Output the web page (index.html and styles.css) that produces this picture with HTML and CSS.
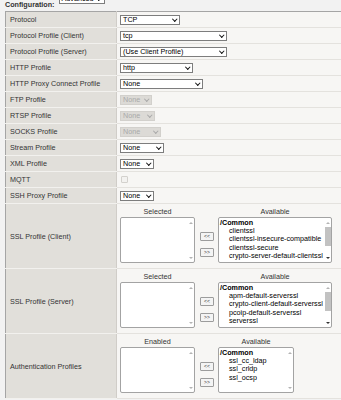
FILE: index.html
```html
<!DOCTYPE html>
<html lang="en">
<head>
    <meta charset="UTF-8">
    <title>Virtual Server Properties</title>
    <link rel="stylesheet" href="styles.css">
</head>
<body>
    <div class="config-bar">
        <span class="config-label">Configuration:</span>
        <span class="sel sel-adv">Advanced</span>
    </div>

    <table class="props">
        <tr><th>Protocol</th><td><span class="sel w-tcp">TCP</span></td></tr>
        <tr><th>Protocol Profile (Client)</th><td><span class="sel w-long">tcp</span></td></tr>
        <tr><th>Protocol Profile (Server)</th><td><span class="sel w-long">(Use Client Profile)</span></td></tr>
        <tr><th>HTTP Profile</th><td><span class="sel w-http">http</span></td></tr>
        <tr><th>HTTP Proxy Connect Profile</th><td><span class="sel w-proxy">None</span></td></tr>
        <tr><th>FTP Profile</th><td><span class="sel off w-ftp">None</span></td></tr>
        <tr><th>RTSP Profile</th><td><span class="sel off w-rtsp">None</span></td></tr>
        <tr><th>SOCKS Profile</th><td><span class="sel off w-socks">None</span></td></tr>
        <tr><th>Stream Profile</th><td><span class="sel w-stream">None</span></td></tr>
        <tr><th>XML Profile</th><td><span class="sel w-small">None</span></td></tr>
        <tr><th>MQTT</th><td><span class="check"></span></td></tr>
        <tr><th>SSH Proxy Profile</th><td><span class="sel w-small">None</span></td></tr>

        <tr class="tall">
            <th>SSL Profile (Client)</th>
            <td>
                <div class="picker">
                    <div class="pick-col">
                        <div class="pick-head">Selected</div>
                        <div class="listbox w-sel">
                            <div class="items"></div>
                            <div class="scroll"><span class="up"></span><span class="track"></span><span class="down"></span></div>
                        </div>
                    </div>
                    <div class="movers"><span class="mv">&lt;&lt;</span><span class="mv">&gt;&gt;</span></div>
                    <div class="pick-col">
                        <div class="pick-head">Available</div>
                        <div class="listbox w-avail">
                            <div class="items">
                                <div class="grp">/Common</div>
                                <div class="it">clientssl</div>
                                <div class="it">clientssl-insecure-compatible</div>
                                <div class="it">clientssl-secure</div>
                                <div class="it">crypto-server-default-clientssl</div>
                            </div>
                            <div class="scroll live"><span class="up"></span><span class="thumb"></span><span class="track"></span><span class="down"></span></div>
                        </div>
                    </div>
                </div>
            </td>
        </tr>

        <tr class="tall">
            <th>SSL Profile (Server)</th>
            <td>
                <div class="picker">
                    <div class="pick-col">
                        <div class="pick-head">Selected</div>
                        <div class="listbox w-sel">
                            <div class="items"></div>
                            <div class="scroll"><span class="up"></span><span class="track"></span><span class="down"></span></div>
                        </div>
                    </div>
                    <div class="movers"><span class="mv">&lt;&lt;</span><span class="mv">&gt;&gt;</span></div>
                    <div class="pick-col">
                        <div class="pick-head">Available</div>
                        <div class="listbox w-avail">
                            <div class="items">
                                <div class="grp">/Common</div>
                                <div class="it">apm-default-serverssl</div>
                                <div class="it">crypto-client-default-serverssl</div>
                                <div class="it">pcoip-default-serverssl</div>
                                <div class="it">serverssl</div>
                            </div>
                            <div class="scroll live"><span class="up"></span><span class="thumb"></span><span class="track"></span><span class="down"></span></div>
                        </div>
                    </div>
                </div>
            </td>
        </tr>

        <tr class="tall">
            <th>Authentication Profiles</th>
            <td>
                <div class="picker">
                    <div class="pick-col">
                        <div class="pick-head">Enabled</div>
                        <div class="listbox w-sel">
                            <div class="items"></div>
                            <div class="scroll"><span class="up"></span><span class="track"></span><span class="down"></span></div>
                        </div>
                    </div>
                    <div class="movers"><span class="mv">&lt;&lt;</span><span class="mv">&gt;&gt;</span></div>
                    <div class="pick-col">
                        <div class="pick-head">Available</div>
                        <div class="listbox w-auth">
                            <div class="items">
                                <div class="grp">/Common</div>
                                <div class="it">ssl_cc_ldap</div>
                                <div class="it">ssl_crldp</div>
                                <div class="it">ssl_ocsp</div>
                            </div>
                            <div class="scroll"><span class="up"></span><span class="track"></span><span class="down"></span></div>
                        </div>
                    </div>
                </div>
            </td>
        </tr>
    </table>
</body>
</html>
```

FILE: styles.css
```css
body {
    margin: 0;
    font-family: "Liberation Sans", Arial, sans-serif;
    font-size: 7.2px;
    color: #222;
    background-color: #f2f2f2;
}

/* top "Configuration" line, cut off by the top edge */
.config-bar {
    display: flex;
    align-items: flex-start;
    height: 11px;
    padding-left: 5px;
    gap: 4px;
}

.config-label {
    font-weight: bold;
    color: #333;
    padding-top: 1px;
    line-height: 8px;
}

.sel-adv {
    width: 46px;
    margin-top: -6px;
}

/* property table */
.props {
    border-collapse: collapse;
    margin-left: 5px;
    width: 336px;
    border-top: 1px solid #a5a5a5;
    border-left: 1px solid #a5a5a5;
}

.props th {
    width: 106px;
    height: 15px;
    padding: 0 0 0 4px;
    text-align: left;
    font-weight: normal;
    color: #333;
    background-color: #e1dfda;
    border-bottom: 1px solid #f2f1ee;
    border-right: 1px solid #d0cdc8;
    white-space: nowrap;
}

.props td {
    height: 15px;
    padding: 0 0 0 3px;
    background-color: #f7f6f4;
    border-bottom: 1px solid #e4e2de;
}

.props tr.tall th,
.props tr.tall td {
    height: 64px;
}

.props tr.tall td {
    vertical-align: top;
}

/* drop-down look */
.sel {
    display: flex;
    align-items: center;
    justify-content: space-between;
    box-sizing: border-box;
    height: 10px;
    padding: 0 3px 0 2px;
    line-height: 8px;
    color: #000;
    background-color: #fff;
    border: 1px solid #7d7d7d;
    white-space: nowrap;
}

.sel::after {
    content: "";
    width: 2.5px;
    height: 2.5px;
    margin-top: -2px;
    border-right: 1.4px solid #111;
    border-bottom: 1.4px solid #111;
    transform: rotate(45deg);
}

.sel.off {
    color: #a9a9a9;
    background-color: #dcdad6;
    border-color: #d2d0cc;
}

.sel.off::after {
    border-color: #a9a9a9;
    border-width: 0 1px 1px 0;
}

.w-tcp { width: 60px; }
.w-long { width: 107px; }
.w-http { width: 73px; }
.w-proxy { width: 83px; }
.w-ftp { width: 32px; }
.w-rtsp { width: 35px; }
.w-socks { width: 41px; }
.w-stream { width: 44px; }
.w-small { width: 34px; }

.check {
    display: block;
    width: 5px;
    height: 5px;
    margin-left: 1px;
    border: 1px solid #d3d1cd;
    border-radius: 1px;
    background-color: #f3f2f0;
}

/* dual list picker */
.picker {
    display: flex;
    align-items: flex-start;
    padding-top: 3px;
}

.pick-col {
    display: flex;
    flex-direction: column;
    align-items: center;
}

.pick-head {
    height: 10px;
    line-height: 10px;
    color: #333;
}

.listbox {
    display: flex;
    box-sizing: border-box;
    height: 46px;
    margin-top: 0;
    background-color: #fff;
    border: 1px solid #a3a3a3;
    border-radius: 2px;
}

.w-sel { width: 75px; }
.w-avail { width: 114px; }
.w-auth { width: 76px; }

.items {
    flex: 1;
    padding: 1px 0 0 1px;
    line-height: 8.2px;
    color: #000;
    overflow: hidden;
    white-space: nowrap;
}

.grp {
    font-weight: bold;
}

.it {
    padding-left: 9px;
}

.scroll {
    display: flex;
    flex-direction: column;
    align-items: center;
    width: 7px;
    padding: 4px 0 3px;
    box-sizing: border-box;
}

.scroll .track {
    flex: 1;
}

.up,
.down {
    width: 0;
    height: 0;
    border-left: 2px solid transparent;
    border-right: 2px solid transparent;
}

.up {
    border-bottom: 2px solid #b4b4b4;
}

.down {
    border-top: 2px solid #b4b4b4;
}

.scroll.live .down {
    border-top-color: #333;
}

.scroll.live .thumb {
    width: 6px;
    height: 19px;
    margin-top: 3px;
    background-color: #c2c2c2;
}

.movers {
    display: flex;
    flex-direction: column;
    gap: 7px;
    margin: 25px 4px 0 5px;
}

.mv {
    box-sizing: border-box;
    width: 14px;
    height: 9px;
    line-height: 7px;
    font-size: 5px;
    text-align: center;
    color: #333;
    background-color: #f4f4f4;
    border: 1px solid #9c9c9c;
    border-radius: 1px;
}
```
